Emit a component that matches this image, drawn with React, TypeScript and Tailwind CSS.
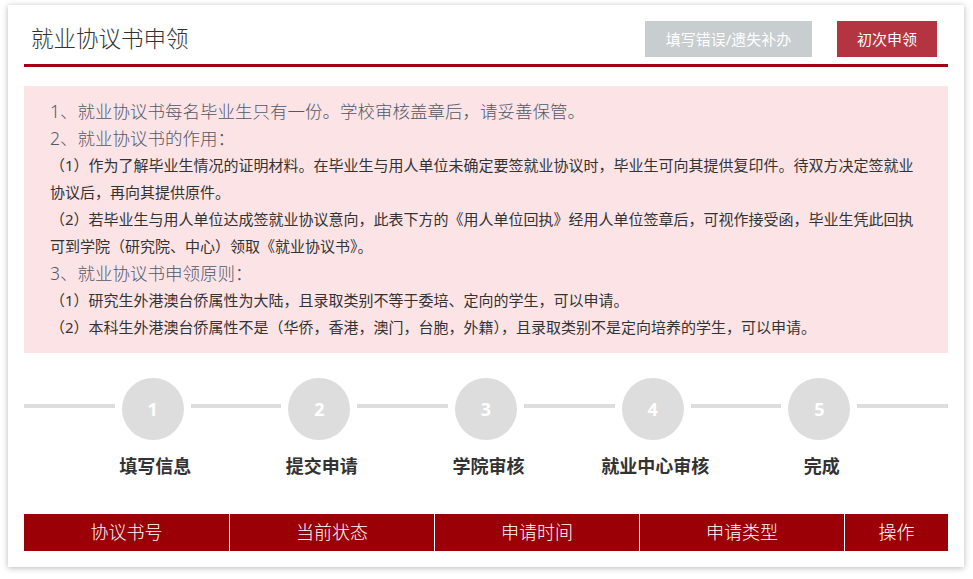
export default function App() {
  const font = { fontFamily: '"Noto Sans", "Noto Sans CJK SC", sans-serif' };

  const steps = ["填写信息", "提交申请", "学院审核", "就业中心审核", "完成"];
  const columns = ["协议书号", "当前状态", "申请时间", "申请类型", "操作"];

  return (
    <div className="min-h-screen bg-white pt-[5px] pl-[8px]" style={font}>
      <div className="w-[956px] bg-white px-4 pt-4 pb-4 shadow-[0_1px_6px_rgba(0,0,0,0.28)]">
        {/* header */}
        <div className="flex h-9 items-center justify-between">
          <span className="pl-[7px] text-[22.5px] font-light text-[#333]">就业协议书申领</span>
          <div className="flex gap-[25px] pr-[11px]">
            <button className="h-9 w-[167px] bg-[#c8cdcf] text-[15px] text-white">
              填写错误/遗失补办
            </button>
            <button className="h-9 w-[100px] bg-[#b53441] text-[15px] text-white">初次申领</button>
          </div>
        </div>
        <div className="mt-[7px] h-[3px] bg-[#a30014]" />

        {/* notice */}
        <div className="mt-[19px] bg-[#fce4e6] px-[26px] py-3 leading-[27px]">
          <p className="text-[17.5px] font-light text-[#525866]">
            1、就业协议书每名毕业生只有一份。学校审核盖章后，请妥善保管。
          </p>
          <p className="text-[17.5px] font-light text-[#525866]">2、就业协议书的作用：</p>
          <p className="text-[15px] text-[#333]">
            （1）作为了解毕业生情况的证明材料。在毕业生与用人单位未确定要签就业协议时，毕业生可向其提供复印件。待双方决定签就业协议后，再向其提供原件。
          </p>
          <p className="text-[15px] text-[#333]">
            （2）若毕业生与用人单位达成签就业协议意向，此表下方的《用人单位回执》经用人单位签章后，可视作接受函，毕业生凭此回执可到学院（研究院、中心）领取《就业协议书》。
          </p>
          <p className="text-[17.5px] font-light text-[#525866]">3、就业协议书申领原则：</p>
          <p className="text-[15px] text-[#333]">
            （1）研究生外港澳台侨属性为大陆，且录取类别不等于委培、定向的学生，可以申请。
          </p>
          <p className="text-[15px] text-[#333]">
            （2）本科生外港澳台侨属性不是（华侨，香港，澳门，台胞，外籍），且录取类别不是定向培养的学生，可以申请。
          </p>
        </div>

        {/* steps */}
        <div className="mt-[25px] flex items-start">
          <div className="mt-[26px] h-1 flex-1 bg-[#dddddd]" />
          {steps.map((s, i) => (
            <div key={s} className="contents">
              <div className="mx-[7px] flex w-[62px] flex-col items-center">
                <div className="flex h-[62px] w-[62px] items-center justify-center rounded-full bg-[#dddddd] text-[18px] font-bold text-white">
                  {i + 1}
                </div>
                <span className="mt-[13px] whitespace-nowrap pl-[5px] text-[18px] font-bold leading-[27px] text-[#333]">
                  {s}
                </span>
              </div>
              <div className="mt-[26px] h-1 flex-1 bg-[#dddddd]" />
            </div>
          ))}
        </div>

        {/* table head */}
        <div className="mt-[34px] grid h-[37px] grid-cols-[205px_205px_205px_205px_1fr] bg-[#9a0006]">
          {columns.map((c, i) => (
            <div
              key={c}
              className={
                i === 0
                  ? "flex items-center justify-center text-[18px] font-light text-white"
                  : "flex items-center justify-center border-l border-white text-[18px] font-light text-white"
              }
            >
              {c}
            </div>
          ))}
        </div>
      </div>
    </div>
  );
}
